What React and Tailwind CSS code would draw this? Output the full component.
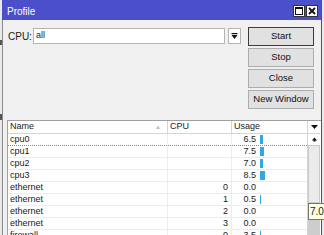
import React from 'react';

const rows = [
  { name: 'cpu0', cpu: '', usage: '6.5', bar: 3, focus: true },
  { name: 'cpu1', cpu: '', usage: '7.5', bar: 4 },
  { name: 'cpu2', cpu: '', usage: '7.0', bar: 3 },
  { name: 'cpu3', cpu: '', usage: '8.5', bar: 5 },
  { name: 'ethernet', cpu: '0', usage: '0.0', bar: 0 },
  { name: 'ethernet', cpu: '1', usage: '0.5', bar: 1 },
  { name: 'ethernet', cpu: '2', usage: '0.0', bar: 0 },
  { name: 'ethernet', cpu: '3', usage: '0.0', bar: 0 },
  { name: 'firewall', cpu: '0', usage: '3.5', bar: 1 },
];

function Btn({ children, primary }) {
  return (
    <div
      className={`h-[19px] w-[66px] flex items-center justify-center bg-[#e1e1e1] text-[#111] text-[9.5px] ${
        primary ? 'border border-[#3c3c3c]' : 'border border-[#adadad]'
      }`}
    >
      {children}
    </div>
  );
}

function Row({ r }) {
  return (
    <div
      className={`flex h-[12px] shrink-0 items-center bg-white border-b ${
        r.focus ? 'border-dotted border-[#8a8a8a]' : 'border-[#ececec]'
      }`}
    >
      <div className="w-[160px] pl-[2px] leading-none border-r border-[#ececec] h-full flex items-center">{r.name}</div>
      <div className="w-[64px] pr-[3px] leading-none text-right border-r border-[#ececec] h-full flex items-center justify-end">
        {r.cpu}
      </div>
      <div className="w-[75px] flex items-center h-full">
        <span className="w-[24px] text-right leading-none">{r.usage}</span>
        <span className="ml-[4px] h-[9px] bg-[#2fa8e6]" style={{ width: r.bar }} />
      </div>
    </div>
  );
}

export default function App() {
  return (
    <div
      className="relative w-[324px] h-[235px] overflow-hidden bg-[#e9e9e9] text-[9px] text-[#1a1a1a]"
      style={{ fontFamily: '"Liberation Sans", Arial, sans-serif' }}
    >
      {/* bits of the window behind */}
      <div className="absolute left-0 top-[40px] w-[2px] h-[5px] bg-[#555]" />
      <div className="absolute left-0 top-[114px] w-[2px] h-[6px] bg-[#555]" />

      <div className="ml-[2px] w-[320px] h-full flex flex-col border-r border-[#555]">
        {/* title bar */}
        <div className="h-[20px] shrink-0 bg-[#4b4fc9] flex items-center justify-between pl-[5px] pr-[3px] pt-[2px]">
          <span className="text-white text-[10px]">Profile</span>
          <div className="flex gap-[1px]">
            <div className="w-[12px] h-[12px] bg-white border border-[#333] flex items-center justify-center">
              <div className="w-[8px] h-[8px] border border-[#111] border-t-2" />
            </div>
            <div className="w-[12px] h-[12px] bg-white border border-[#333] flex items-center justify-center">
              <svg width="8" height="8" viewBox="0 0 8 8">
                <path d="M1 1 L7 7 M7 1 L1 7" stroke="#111" strokeWidth="1.8" />
              </svg>
            </div>
          </div>
        </div>

        {/* body */}
        <div className="flex-1 bg-[#f0f0f0] flex flex-col border-l border-[#8a8a8a]">
          <div className="flex pt-[7px] pl-[5px]">
            <div className="flex items-start pt-[1px]">
              <span className="w-[25px] h-[16px] flex items-center text-[10px]">CPU:</span>
              <div className="w-[192px] h-[16px] bg-white border border-[#b5b5b5] flex items-center pl-[2px] text-[9px]">
                all
              </div>
              <div className="ml-[3px] w-[13px] h-[16px] bg-white border border-[#b5b5b5] flex items-center justify-center">
                <svg width="7" height="7" viewBox="0 0 7 7">
                  <rect x="0.5" y="0" width="6" height="1.2" fill="#111" />
                  <path d="M0.5 2 L6.5 2 L3.5 6 Z" fill="#111" />
                </svg>
              </div>
            </div>
            <div className="ml-[7px] flex flex-col gap-[2px]">
              <Btn primary>Start</Btn>
              <Btn>Stop</Btn>
              <Btn>Close</Btn>
              <Btn>New Window</Btn>
            </div>
          </div>

          {/* table */}
          <div className="mt-[11px] ml-[4px] flex-1 flex border-l border-t border-[#a0a0a0] bg-white">
            <div className="w-[299px] flex flex-col">
              <div className="flex h-[13px] shrink-0 items-center border-b border-[#d5d5d5] bg-white">
                <div className="w-[160px] pl-[2px] h-full flex items-center justify-between border-r border-[#d5d5d5]">
                  <span>Name</span>
                  <span className="text-[6px] text-[#bbb] mr-[6px]">▲</span>
                </div>
                <div className="w-[64px] pl-[2px] h-full flex items-center border-r border-[#d5d5d5]">CPU</div>
                <div className="w-[75px] pl-[2px] h-full flex items-center">Usage</div>
              </div>
              {rows.map((r, i) => (
                <Row key={i} r={r} />
              ))}
            </div>
            {/* scroll column */}
            <div className="w-[13px] flex flex-col border-l border-[#d5d5d5] bg-[#f0f0f0]">
              <div className="h-[13px] shrink-0 bg-white border-b border-[#d5d5d5] flex items-center justify-center">
                <svg width="7" height="4" viewBox="0 0 7 4">
                  <path d="M0 0 L7 0 L3.5 4 Z" fill="#111" />
                </svg>
              </div>
              <div className="h-[11px] shrink-0 bg-white flex items-center justify-center">
                <svg width="5" height="5" viewBox="0 0 5 5">
                  <path d="M0 3.5 L2.5 0.5 L5 3.5 Z" fill="#111" />
                  <rect x="1.5" y="3" width="2" height="1.5" fill="#111" />
                </svg>
              </div>
              <div className="h-[58px] shrink-0 bg-[#ebebeb] border border-[#c9c9c9]" />
              <div className="flex-1 bg-[#cdcdcd]" />
            </div>
          </div>
        </div>
      </div>

      {/* tooltip */}
      <div className="absolute left-[308px] top-[203px] h-[17px] w-[20px] bg-[#ffffe1] border border-[#767676] flex items-center pl-[1px] text-[10px]">
        7.0
      </div>
    </div>
  );
}
